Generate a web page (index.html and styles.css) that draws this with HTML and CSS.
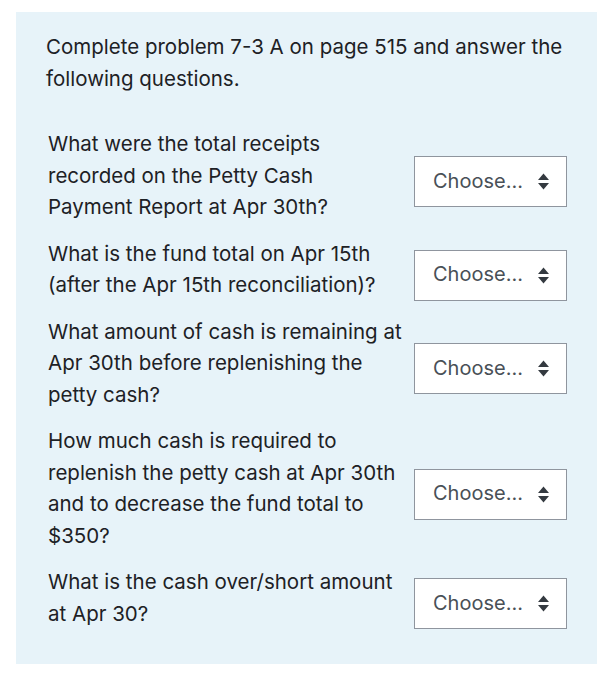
FILE: index.html
```html
<!DOCTYPE html>
<html lang="en">
<head>
<meta charset="utf-8">
<title>Petty cash questions</title>
<link rel="stylesheet" href="styles.css">
</head>
<body>
<div class="formulation">
  <p class="intro">Complete problem 7-3 A on page 515 and answer the following questions.</p>
  <div class="rows">
    <div class="row">
      <div class="qtext">What were the total receipts recorded on the Petty Cash Payment Report at Apr 30th?</div>
      <div class="select"><span>Choose...</span><svg class="arrows" width="11" height="17" viewBox="0 0 11 17"><polygon points="0,7 5.5,0.5 11,7"/><polygon points="0,10 11,10 5.5,16.5"/></svg></div>
    </div>
    <div class="row">
      <div class="qtext">What is the fund total on Apr 15th (after the Apr 15th reconciliation)?</div>
      <div class="select"><span>Choose...</span><svg class="arrows" width="11" height="17" viewBox="0 0 11 17"><polygon points="0,7 5.5,0.5 11,7"/><polygon points="0,10 11,10 5.5,16.5"/></svg></div>
    </div>
    <div class="row">
      <div class="qtext">What amount of cash is remaining at Apr 30th before replenishing the petty cash?</div>
      <div class="select"><span>Choose...</span><svg class="arrows" width="11" height="17" viewBox="0 0 11 17"><polygon points="0,7 5.5,0.5 11,7"/><polygon points="0,10 11,10 5.5,16.5"/></svg></div>
    </div>
    <div class="row">
      <div class="qtext">How much cash is required to replenish the petty cash at Apr 30th and to decrease the fund total to $350?</div>
      <div class="select"><span>Choose...</span><svg class="arrows" width="11" height="17" viewBox="0 0 11 17"><polygon points="0,7 5.5,0.5 11,7"/><polygon points="0,10 11,10 5.5,16.5"/></svg></div>
    </div>
    <div class="row">
      <div class="qtext">What is the cash over/short amount at Apr 30?</div>
      <div class="select"><span>Choose...</span><svg class="arrows" width="11" height="17" viewBox="0 0 11 17"><polygon points="0,7 5.5,0.5 11,7"/><polygon points="0,10 11,10 5.5,16.5"/></svg></div>
    </div>
  </div>
</div>
</body>
</html>
```
FILE: styles.css
```css
html, body {
  margin: 0;
  padding: 0;
  background: #ffffff;
}
body {
  font-family: Inter, "Liberation Sans", sans-serif;
  color: #1d2125;
}
.formulation {
  margin: 12px 12px 0 16px;
  width: 581px;
  box-sizing: border-box;
  padding: 19px 30px 35px 30px;
  background: #e7f3f9;
  font-size: 20.5px;
  line-height: 31.5px;
}
.intro {
  margin: 0 0 34px 0;
}
.rows {
  display: flex;
  flex-direction: column;
  gap: 15px;
}
.row {
  display: flex;
  align-items: center;
  gap: 8px;
}
.qtext {
  flex: 1;
  padding-left: 2px;
  padding-right: 4px;
}
.select {
  flex: 0 0 153px;
  box-sizing: border-box;
  height: 51px;
  margin-top: 12px;
  border: 1px solid #8f959e;
  background: #ffffff;
  display: flex;
  align-items: center;
  justify-content: space-between;
  padding: 0 17px 0 18px;
  font-size: 20px;
  color: #495057;
}
.arrows {
  fill: #343a40;
  display: block;
}
```
